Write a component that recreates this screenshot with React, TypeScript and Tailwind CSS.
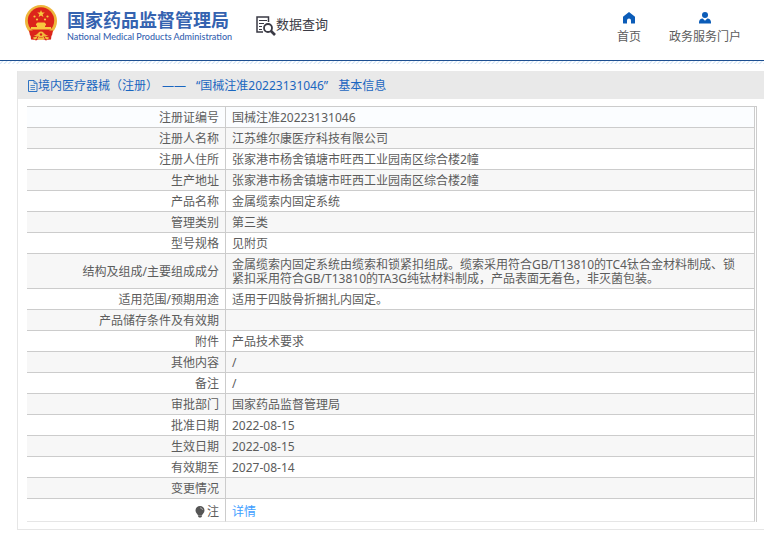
import type { ReactNode } from "react";

const rows: { label: string; value: string }[] = [
  { label: "注册证编号", value: "国械注准20223131046" },
  { label: "注册人名称", value: "江苏维尔康医疗科技有限公司" },
  { label: "注册人住所", value: "张家港市杨舍镇塘市旺西工业园南区综合楼2幢" },
  { label: "生产地址", value: "张家港市杨舍镇塘市旺西工业园南区综合楼2幢" },
  { label: "产品名称", value: "金属缆索内固定系统" },
  { label: "管理类别", value: "第三类" },
  { label: "型号规格", value: "见附页" },
  {
    label: "结构及组成/主要组成成分",
    value:
      "金属缆索内固定系统由缆索和锁紧扣组成。缆索采用符合GB/T13810的TC4钛合金材料制成、锁紧扣采用符合GB/T13810的TA3G纯钛材料制成，产品表面无着色，非灭菌包装。",
  },
  { label: "适用范围/预期用途", value: "适用于四肢骨折捆扎内固定。" },
  { label: "产品储存条件及有效期", value: "" },
  { label: "附件", value: "产品技术要求" },
  { label: "其他内容", value: "/" },
  { label: "备注", value: "/" },
  { label: "审批部门", value: "国家药品监督管理局" },
  { label: "批准日期", value: "2022-08-15" },
  { label: "生效日期", value: "2022-08-15" },
  { label: "有效期至", value: "2027-08-14" },
  { label: "变更情况", value: "" },
];

function Emblem() {
  return (
    <svg viewBox="0 0 34 36" className="w-[34px] h-9 shrink-0" aria-hidden="true">
      <path d="M6 26h22l-1 8.500-5 .5-5-1-5 1-5-.5z" fill="#d8261c" />
      <circle cx="17" cy="16" r="16" fill="#eeb63c" />
      <circle cx="17" cy="15.500" r="13.200" fill="#dc241b" />
      <path d="M17 5l1 2.600h2.800l-2.200 1.700.8 2.700-2.400-1.600-2.400 1.600.8-2.700-2.200-1.700H16z" fill="#f8c83e" />
      <circle cx="10.500" cy="11.500" r="1.100" fill="#f8c83e" />
      <circle cx="23.500" cy="11.500" r="1.100" fill="#f8c83e" />
      <circle cx="13" cy="14.500" r="1.100" fill="#f8c83e" />
      <circle cx="21" cy="14.500" r="1.100" fill="#f8c83e" />
      <path d="M12 19l1.500-1.500h7L22 19v1.500h-1V22h6v2.500H7V22h6v-1.500h-1z" fill="#f8c83e" />
      <path d="M5 25.500h24l-1 5-6-.5-2-2h-6l-2 2-6 .5z" fill="#dc241b" />
      <circle cx="17" cy="29.500" r="3" fill="#f3bd3b" />
      <circle cx="17" cy="29.500" r="1.200" fill="#d8261c" />
      <path d="M9 32.500l4-1 4 1.500 4-1.500 4 1-1 2-3-.5-4 1-4-1-3 .5z" fill="#f3bd3b" />
      <path d="M14 31.500l-2 4M20 31.500l2 4" stroke="#d8261c" fill="none" />
    </svg>
  );
}

function SearchDocIcon() {
  return (
    <svg viewBox="0 0 20 20" className="w-5 h-5 shrink-0" fill="none" stroke="#3a3a44" aria-hidden="true">
      <path d="M7 16H1V1h11.500v5" strokeWidth="1.500" />
      <path d="M3 4.500h8M3 7.500h5M3 10.500h3M3 13.500h3" strokeWidth="1.200" />
      <circle cx="12" cy="12" r="4" strokeWidth="1.800" />
      <path d="M15 15l4 4" strokeWidth="2.600" />
    </svg>
  );
}

function HomeIcon() {
  return (
    <svg viewBox="0 0 12 12" className="w-3 h-3" fill="#0b5cb8" aria-hidden="true">
      <path d="M6 0l6 4.800V11a.6.6 0 0 1-.6.6H8V8.500a2 2 0 0 0-4 0v3.100H.6A.6.6 0 0 1 0 11V4.800z" />
    </svg>
  );
}

function UserIcon() {
  return (
    <svg viewBox="0 0 12 12" className="w-3 h-3" fill="#0b5cb8" aria-hidden="true">
      <circle cx="6" cy="3" r="3" />
      <path d="M0 11.600V10q.2-3.200 3.700-3.600L6 8.700l2.300-2.300Q11.800 6.800 12 10v1.600z" />
    </svg>
  );
}

function FileIcon() {
  return (
    <svg viewBox="0 0 10 12" className="w-[10px] h-3 shrink-0" fill="none" stroke="#1a66c0" aria-hidden="true">
      <path d="M.5.5h5.500l3 3v8h-8.500z" strokeWidth=".9" />
      <path d="M6 .5v3h3M2.500 5.500h4.500M2.500 7.500h4.500M2.500 9.500h4.500" strokeWidth=".7" />
    </svg>
  );
}

function BulbIcon() {
  return (
    <svg viewBox="0 0 10 12" className="w-[10px] h-3" fill="#555" aria-hidden="true">
      <path d="M5 0a4.500 4.500 0 0 1 4.500 4.500C9.500 7 7.500 7.800 7 9.500H3C2.500 7.800.5 7 .5 4.500A4.500 4.500 0 0 1 5 0z" />
      <path d="M3.200 9.500h3.600v1L6 11.500H4l-.8-1z" />
      <path d="M5 1.800q2.300 0 2.600 2.200" stroke="#ccc" strokeWidth=".7" fill="none" />
    </svg>
  );
}

function NavLink({ icon, children }: { icon: ReactNode; children: ReactNode }) {
  return (
    <a href="#" className="flex flex-col items-center gap-[5px] text-xs text-[#5c5c5c]">
      {icon}
      {children}
    </a>
  );
}

export default function App() {
  return (
    <div className="bg-white text-xs text-[#5c5c5c] font-['Noto_Sans','Noto_Sans_CJK_SC',sans-serif]">
      <header className="flex h-[60px] items-start justify-between pl-6 pr-[23px]">
        <div className="flex">
          <a href="#" className="flex gap-[9px] pt-[5px] text-[#3563b0]">
            <Emblem />
            <span className="flex flex-col pt-1">
              <span className="text-lg leading-[22px] font-bold">国家药品监督管理局</span>
              <span className="text-[9px] leading-3 font-medium font-['Lato',sans-serif]">
                National Medical Products Administration
              </span>
            </span>
          </a>
          <h1 className="flex items-start pl-6 pt-4 text-[13px] leading-4 text-[#3a3a44]">
            <SearchDocIcon />
            数据查询
          </h1>
        </div>
        <nav className="flex gap-7 pt-3">
          <NavLink icon={<HomeIcon />}>首页</NavLink>
          <NavLink icon={<UserIcon />}>政务服务门户</NavLink>
        </nav>
      </header>
      <div className="h-1 border-t border-[#1d4f91] bg-[repeating-linear-gradient(135deg,#ffffff_0px,#ffffff_1px,#d3e4f5_2px,#ffffff_3px)]" />

      <main className="mt-[7px] ml-[17px] border-l border-b border-[#e6e6e6] pb-[7px]">
        <h2 className="flex h-7 items-center bg-[#e9e9e9] pt-0.5 pl-[10px] text-[#1a66c0]">
          <FileIcon />
          <span>境内医疗器械（注册）</span>
          <span className="ml-1">——</span>
          <span className="ml-[10px]">“国械注准20223131046”</span>
          <span className="ml-[10px]">基本信息</span>
        </h2>
        <div className="mt-[7px] ml-[9px] mr-[7px] border-t border-r border-[#ccc] pr-px">
          <table className="w-full table-fixed border-separate border-spacing-0 leading-[14px]">
            <tbody>
              {rows.map((row) => (
                <tr key={row.label} className="h-[21px] even:bg-[#f7f7f7] first:bg-[#fbfdff]">
                  <th
                    scope="row"
                    className="w-[199px] border-b border-r border-[#ccc] pt-1 pb-0.5 pr-[6px] text-right font-normal"
                  >
                    {row.label}
                  </th>
                  <td className="border-b border-r border-[#ccc] pt-1 pb-0.5 pl-[6px] pr-3">{row.value}</td>
                </tr>
              ))}
              <tr className="h-[23px]">
                <th
                  scope="row"
                  className="border-b border-r border-b-[#e6e6e6] border-r-[#ccc] pt-[3px] pr-[6px] font-normal"
                >
                  <span className="flex items-center justify-end gap-[2px]">
                    <BulbIcon />注
                  </span>
                </th>
                <td className="border-b border-r border-b-[#e6e6e6] border-r-[#ccc] pt-1 pl-[6px]">
                  <a href="#" className="text-[#409eff]">
                    详情
                  </a>
                </td>
              </tr>
            </tbody>
          </table>
        </div>
      </main>
    </div>
  );
}
